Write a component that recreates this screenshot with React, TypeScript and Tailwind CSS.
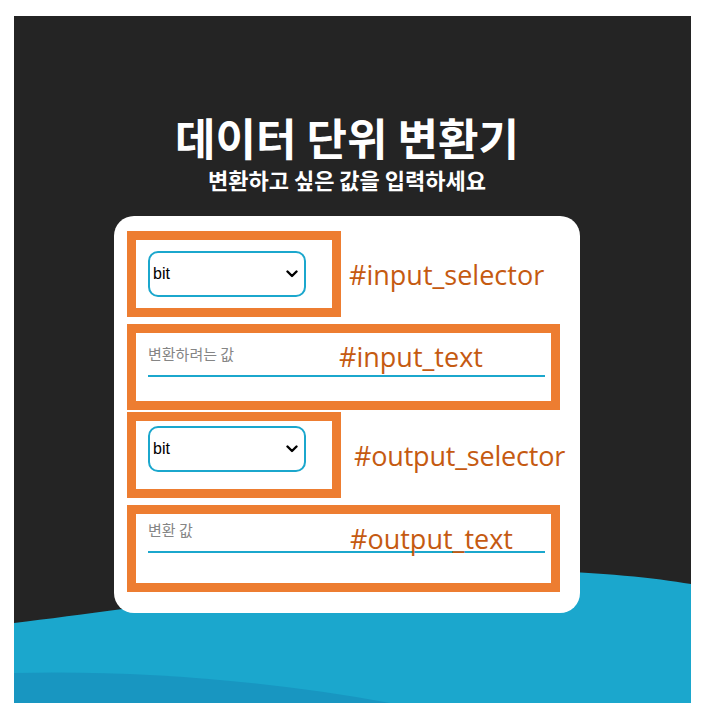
import { useState } from "react";

// 화살표 아이콘 (select 오른쪽)
const Chevron = () => (
  <svg
    className="pointer-events-none absolute right-[8px] top-1/2 -translate-y-1/2"
    width="12"
    height="8"
    viewBox="0 0 12 8"
    fill="none"
  >
    <path d="M1.5 1.5 L6 6 L10.5 1.5" stroke="#000" strokeWidth="2.4" strokeLinecap="round" strokeLinejoin="round" />
  </svg>
);

const UnitSelect = ({ value, onChange }: { value: string; onChange: (v: string) => void }) => (
  <div className="relative w-[158px] h-[46px]">
    <select
      value={value}
      onChange={(e) => onChange(e.target.value)}
      className="appearance-none w-full h-full border-2 border-[#1ba7cd] rounded-[10px] bg-white pl-[3px] text-[16px] text-black font-['Liberation_Sans',Arial,sans-serif] outline-none"
    >
      <option value="bit">bit</option>
      <option value="byte">byte</option>
      <option value="KB">KB</option>
      <option value="MB">MB</option>
      <option value="GB">GB</option>
    </select>
    <Chevron />
  </div>
);

const labelClass =
  "font-['Open_Sans',sans-serif] text-[27px] leading-none text-[#c55a11] whitespace-nowrap";

export default function App() {
  const [inputUnit, setInputUnit] = useState("bit");
  const [outputUnit, setOutputUnit] = useState("bit");
  const [value, setValue] = useState("");

  return (
    <div className="min-h-screen bg-white pt-[16px] pl-[14px]">
      <div className="relative w-[677px] h-[687px] bg-[#242424] overflow-hidden">
        {/* 배경 물결 */}
        <svg className="absolute inset-0" width="677" height="687" viewBox="0 0 677 687">
          <path
            d="M0 607 C 140 590, 380 553, 515 555 C 590 556, 640 562, 677 568 L677 687 L0 687 Z"
            fill="#1ba7cd"
          />
          <path d="M0 657 C 120 654, 250 664, 376 687 L0 687 Z" fill="#1896c1" />
        </svg>

        <div className="relative flex flex-col w-[466px] ml-[100px] font-['Noto_Sans_CJK_KR',sans-serif]">
          <h1 className="mt-[95px] text-center text-[44px] leading-[53px] font-bold text-white">
            데이터 단위 변환기
          </h1>
          <h2 className="mt-[2px] text-center text-[22px] leading-[26px] font-bold text-white">
            변환하고 싶은 값을 입력하세요
          </h2>

          <div className="mt-[24px] rounded-[20px] bg-white px-[13px] pt-[15px] pb-[21px]">
            {/* #input_selector */}
            <div className="flex items-center gap-[8px]">
              <div className="shrink-0 w-[214px] h-[86px] border-[9px] border-[#ed7d31] pl-[12px] pt-[11px]">
                <UnitSelect value={inputUnit} onChange={setInputUnit} />
              </div>
              <span className={labelClass}>#input_selector</span>
            </div>

            {/* #input_text */}
            <div className="relative mt-[7px] w-[433px] h-[86px] border-[9px] border-[#ed7d31] pl-[12px] pt-[4px]">
              <input
                value={value}
                onChange={(e) => setValue(e.target.value)}
                placeholder="변환하려는 값"
                className="block w-[397px] h-[40px] border-b-2 border-[#1ba7cd] pt-[8px] pb-[14px] text-[15px] text-black placeholder:text-[#858585] outline-none font-['Noto_Sans_CJK_KR',sans-serif]"
              />
              <span className={`absolute left-[203px] top-[10px] ${labelClass}`}>#input_text</span>
            </div>

            {/* #output_selector */}
            <div className="mt-[2px] flex items-center gap-[13px]">
              <div className="shrink-0 w-[214px] h-[86px] border-[9px] border-[#ed7d31] pl-[12px] pt-[5px]">
                <UnitSelect value={outputUnit} onChange={setOutputUnit} />
              </div>
              <span className={`${labelClass} tracking-[-0.2px]`}>#output_selector</span>
            </div>

            {/* #output_text */}
            <div className="relative mt-[7px] w-[433px] h-[87px] border-[9px] border-[#ed7d31] pl-[12px] pt-[2px]">
              <input
                readOnly
                placeholder="변환 값"
                className="block w-[397px] h-[37px] border-b-2 border-[#1ba7cd] pt-0 pb-[9px] text-[15px] text-black placeholder:text-[#858585] outline-none font-['Noto_Sans_CJK_KR',sans-serif]"
              />
              <span className={`absolute left-[214px] top-[11px] ${labelClass}`}>#output_text</span>
            </div>
          </div>
        </div>
      </div>
    </div>
  );
}
